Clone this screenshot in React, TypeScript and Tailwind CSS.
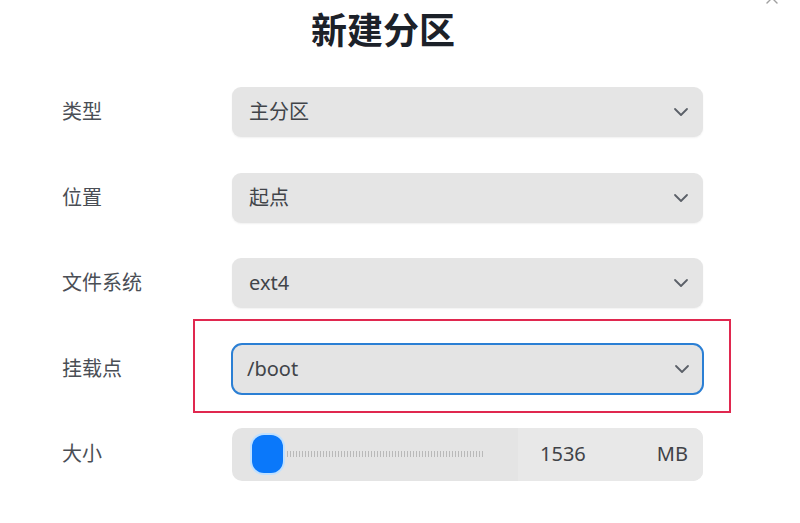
import React from "react";

const Chevron = () => (
  <svg width="16" height="10" viewBox="0 0 16 10" fill="none" className="shrink-0">
    <path d="M2 2l6 6 6-6" stroke="#5b6068" strokeWidth="1.8" strokeLinecap="round" strokeLinejoin="round" />
  </svg>
);

const Select = ({ value, focused }: { value: string; focused?: boolean }) => (
  <div
    className={
      focused
        ? "flex h-[52px] w-[473px] items-center justify-between rounded-[11px] border-2 border-[#2b7fd4] bg-[#e4e4e4] pl-[14px] pr-[12px] -mx-px -my-px"
        : "flex h-[50px] w-[471px] items-center justify-between rounded-[9px] bg-[#e5e5e5] pl-[17px] pr-[14px] shadow-[0_1px_2px_rgba(0,0,0,0.06)]"
    }
  >
    <span className="text-[20px] text-[#414449]">{value}</span>
    <Chevron />
  </div>
);

const Row = ({ label, children }: { label: string; children: React.ReactNode }) => (
  <div className="flex h-[50px] items-center">
    <div className="w-[170px] text-[20px] text-[#4a4e55]">{label}</div>
    {children}
  </div>
);

export default function App() {
  return (
    <div
      className="relative h-[523px] w-[800px] overflow-hidden bg-white"
      style={{ fontFamily: '"Noto Sans", "Noto Sans CJK SC", sans-serif' }}
    >
      {/* close button, mostly outside the shot */}
      <svg className="absolute right-[20px] top-[-10px]" width="16" height="16" viewBox="0 0 16 16" fill="none">
        <path d="M3 3l10 10M13 3L3 13" stroke="#a0a0a0" strokeWidth="1.4" strokeLinecap="round" />
      </svg>

      <h1 className="pt-[5px] text-center text-[36px] font-bold leading-[52px] text-[#1c2129] pr-[34px]">
        新建分区
      </h1>

      <div className="ml-[62px] mt-[30px] flex flex-col gap-[35.5px]">
        <Row label="类型">
          <Select value="主分区" />
        </Row>
        <Row label="位置">
          <Select value="起点" />
        </Row>
        <Row label="文件系统">
          <Select value="ext4" />
        </Row>
        <Row label="挂载点">
          <div className="relative">
            <div className="pointer-events-none absolute left-[-39px] top-[-25px] h-[94px] w-[538px] border-2 border-[#e0284f]" />
            <Select value="/boot" focused />
          </div>
        </Row>
        <Row label="大小">
          <div className="flex h-[53px] w-[471px] overflow-hidden rounded-[10px] bg-[#e4e4e4]">
            <div className="flex w-[286px] items-center pl-[20px]">
              <div className="h-[38px] w-[31px] shrink-0 rounded-[12px] bg-[#0a78fa] shadow-[0_0_0_2px_#bfe0ff]" />
              <div className="ml-[4px] h-[6px] w-[198px] bg-[repeating-linear-gradient(90deg,#b9b9b9_0_1px,transparent_1px_3px)]" />
            </div>
            <div className="flex flex-1 items-center justify-between bg-[#e8e8e8] pl-[22px] pr-[15px]">
              <span className="text-[20px] text-[#3f4247]">1536</span>
              <span className="text-[20px] text-[#3f4247]">MB</span>
            </div>
          </div>
        </Row>
      </div>
    </div>
  );
}
